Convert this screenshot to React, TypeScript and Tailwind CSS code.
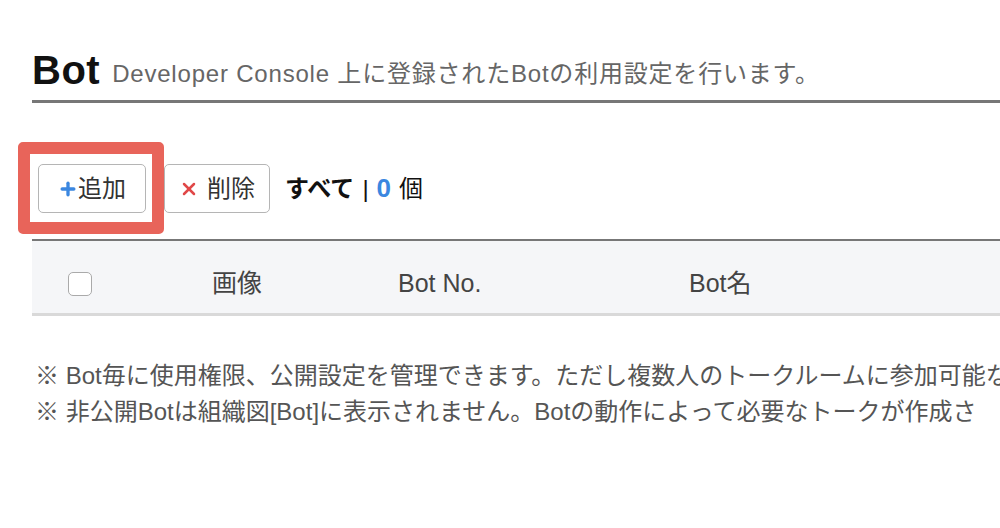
import { Plus, X } from 'lucide-react';

const font = "font-['Liberation_Sans','Noto_Sans_CJK_JP',sans-serif]";

export default function App() {
  return (
    <div className={`w-[1000px] h-[528px] overflow-hidden bg-white ${font}`}>
      <div className="w-[1300px] pl-8 pt-[50px]">
        {/* Page title */}
        <div className="flex items-end gap-3 whitespace-nowrap">
          <h1 className="text-[40px] leading-none font-bold text-[#111] tracking-[0.5px]">Bot</h1>
          <p className="mb-[4px] text-[24px] leading-none text-[#666] tracking-[0.8px]">
            Developer Console 上に登録されたBotの利用設定を行います。
          </p>
        </div>
        <div className="mt-[10px] h-[3px] bg-[#777]" />

        {/* Toolbar */}
        <div className="mt-[61px] ml-[6px] flex items-center whitespace-nowrap">
          <div className="relative">
            <button className="flex h-[49px] w-[108px] items-center justify-center rounded-[5px] border-[1.5px] border-[#b5b5b5] bg-white text-[24px] text-[#333]">
              <Plus className="h-[20px] w-[20px] text-[#3b87e0]" strokeWidth={4} />
              <span>追加</span>
            </button>
            {/* highlight overlay */}
            <div className="pointer-events-none absolute left-[-20px] top-[-22px] h-[92px] w-[146px] rounded-[5px] border-[12px] border-[#e8645a]" />
          </div>
          <button className="ml-[18px] flex h-[49px] w-[106px] items-center justify-center gap-2 rounded-[5px] border-[1.5px] border-[#b5b5b5] bg-white text-[24px] text-[#333]">
            <X className="h-[20px] w-[20px] text-[#e04848]" strokeWidth={3} />
            <span>削除</span>
          </button>
          <div className="ml-[15px] flex items-center text-[24px] font-bold text-[#111]">
            <span>すべて</span>
            <span className="mx-2 font-normal">|</span>
            <span className="text-[26px] text-[#3b87e0]">0</span>
            <span className="ml-2 font-normal">個</span>
          </div>
        </div>

        {/* Table header */}
        <div className="mt-[26px] flex h-[77px] items-center border-t-2 border-b-[3px] border-t-[#777] border-b-[#d9d9d9] bg-[#f5f6f8] pt-[14px] text-[25px] text-[#444] whitespace-nowrap">
          <div className="w-[180px] pl-[36px]">
            <div className="h-[24px] w-[24px] rounded-[5px] border border-[#aaa] bg-white" />
          </div>
          <div className="w-[186px]">画像</div>
          <div className="w-[291px]">Bot No.</div>
          <div>Bot名</div>
        </div>

        {/* Notes */}
        <div className="mt-[42px] pl-[3px] text-[24px] leading-[36px] text-[#555] whitespace-nowrap">
          <p>※ Bot毎に使用権限、公開設定を管理できます。ただし複数人のトークルームに参加可能な</p>
          <p>※ 非公開Botは組織図[Bot]に表示されません。Botの動作によって必要なトークが作成さ</p>
        </div>
      </div>
    </div>
  );
}
